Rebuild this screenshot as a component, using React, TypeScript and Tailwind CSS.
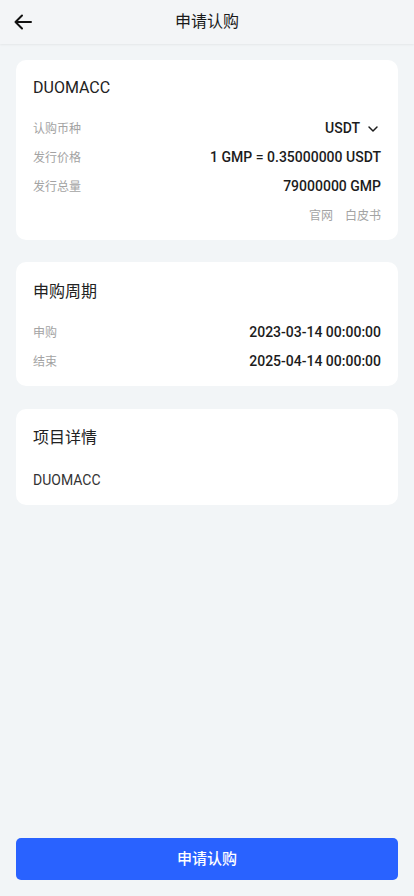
import { ChevronDown } from "lucide-react";

const FONT = { fontFamily: 'Roboto, "Noto Sans CJK SC", sans-serif' };

function Row({ label, children }: { label: string; children: React.ReactNode }) {
  return (
    <div className="flex h-[29px] items-center justify-between">
      <span className="text-[12px] text-[#a3a3a3]">{label}</span>
      <span className="flex items-center text-[14px] font-medium text-[#1c1c1c]">{children}</span>
    </div>
  );
}

export default function App() {
  return (
    <div className="flex min-h-screen flex-col bg-[#f2f5f7]" style={FONT}>
      {/* Header */}
      <header className="relative flex h-[44px] items-center justify-center bg-[#f3f5f7] shadow-[0_1px_2px_rgba(0,0,0,0.06)]">
        <button className="absolute left-[13px] top-[12px] text-[#111]">
          <svg width="20" height="20" viewBox="0 0 20 20" fill="none" stroke="currentColor" strokeWidth="2" strokeLinecap="round" strokeLinejoin="round">
            <path d="M18 10H2.5M9 3.5 2.5 10 9 16.5" />
          </svg>
        </button>
        <h1 className="text-[16px] text-[#1a1a1a]">申请认购</h1>
      </header>

      <main className="flex flex-col px-4 pt-4">
        {/* Info card */}
        <section className="rounded-[10px] bg-white px-[17px] pb-[10px] pt-[17px]">
          <div className="h-[22px] text-[16px] leading-[22px] text-[#222]">DUOMACC</div>
          <div className="mt-[15px]">
            <Row label="认购币种">
              USDT
              <ChevronDown className="ml-[5px] h-[16px] w-[16px]" strokeWidth={2.2} />
            </Row>
            <Row label="发行价格">1 GMP = 0.35000000 USDT</Row>
            <Row label="发行总量">79000000 GMP</Row>
            <div className="flex h-[29px] items-center justify-end gap-[12px] text-[12px] text-[#a3a3a3]">
              <span>官网</span>
              <span>白皮书</span>
            </div>
          </div>
        </section>

        {/* Period card */}
        <section className="mt-[22px] rounded-[10px] bg-white px-[17px] pb-[10px] pt-[19px]">
          <div className="h-[22px] text-[16px] leading-[22px] text-[#222]">申购周期</div>
          <div className="mt-[15px]">
            <Row label="申购">2023-03-14 00:00:00</Row>
            <Row label="结束">2025-04-14 00:00:00</Row>
          </div>
        </section>

        {/* Detail card */}
        <section className="mt-[23px] rounded-[10px] bg-white px-[17px] pb-[10px] pt-[18px]">
          <div className="h-[22px] text-[16px] leading-[22px] text-[#222]">项目详情</div>
          <div className="mt-[17px] flex h-[29px] items-center text-[14px] text-[#333]">DUOMACC</div>
        </section>
      </main>

      <div className="mt-auto px-4 pb-4">
        <button className="h-[42px] w-full rounded-[5px] bg-[#2962ff] text-[15px] font-medium text-white">
          申请认购
        </button>
      </div>
    </div>
  );
}
